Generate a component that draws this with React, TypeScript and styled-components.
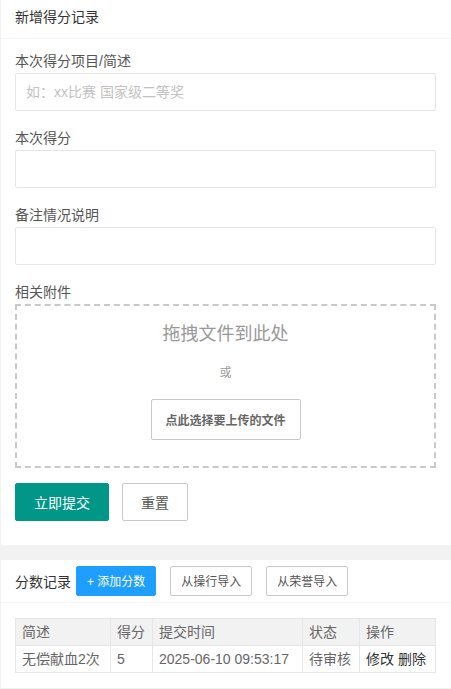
import React from "react";
import styled, { createGlobalStyle } from "styled-components";

const FONT = `"Liberation Sans", "Noto Sans CJK SC", sans-serif`;

const GlobalStyle = createGlobalStyle`
  html, body {
    margin: 0;
    padding: 0;
    background: #f2f2f2;
  }
  body {
    font-family: ${FONT};
    color: #333;
  }
  * {
    box-sizing: border-box;
  }
`;

type Row = {
  title: string;
  score: number;
  time: string;
  status: string;
};

const rows: Row[] = [
  { title: "无偿献血2次", score: 5, time: "2025-06-10 09:53:17", status: "待审核" },
];

const App: React.FC = () => {
  return (
    <>
      <GlobalStyle />
      <Page>
        <Card>
          <CardHeader>新增得分记录</CardHeader>
          <CardBody>
            <FormItem>
              <Label>本次得分项目/简述</Label>
              <Input placeholder="如：xx比赛 国家级二等奖" />
            </FormItem>
            <FormItem>
              <Label>本次得分</Label>
              <Input />
            </FormItem>
            <FormItem>
              <Label>备注情况说明</Label>
              <Input />
            </FormItem>
            <FormItem>
              <Label>相关附件</Label>
              <DropZone>
                <DropTitle>拖拽文件到此处</DropTitle>
                <DropOr>或</DropOr>
                <PickButton type="button">点此选择要上传的文件</PickButton>
              </DropZone>
            </FormItem>
            <Actions>
              <Button $variant="primary" type="button">
                立即提交
              </Button>
              <Button type="button">重置</Button>
            </Actions>
          </CardBody>
        </Card>

        <Card>
          <ToolHeader>
            <HeaderTitle>分数记录</HeaderTitle>
            <SmallButton $variant="normal" type="button">
              + 添加分数
            </SmallButton>
            <SmallButton type="button">从操行导入</SmallButton>
            <SmallButton type="button">从荣誉导入</SmallButton>
          </ToolHeader>
          <TableBody>
            <Table>
              <colgroup>
                <col style={{ width: 95 }} />
                <col style={{ width: 42 }} />
                <col style={{ width: 150 }} />
                <col style={{ width: 57 }} />
                <col />
              </colgroup>
              <thead>
                <tr>
                  <Th>简述</Th>
                  <Th>得分</Th>
                  <Th>提交时间</Th>
                  <Th>状态</Th>
                  <Th>操作</Th>
                </tr>
              </thead>
              <tbody>
                {rows.map((r) => (
                  <tr key={r.time}>
                    <Td>{r.title}</Td>
                    <Td>{r.score}</Td>
                    <Td>{r.time}</Td>
                    <Td>{r.status}</Td>
                    <Td>
                      <OpLink>修改</OpLink> <OpLink>删除</OpLink>
                    </Td>
                  </tr>
                ))}
              </tbody>
            </Table>
          </TableBody>
        </Card>
      </Page>
    </>
  );
};

const Page = styled.div`
  display: flex;
  flex-direction: column;
  gap: 15px;
  padding-left: 1px;
  min-height: 689px;
`;

const Card = styled.div`
  background: #fff;
`;

const CardHeader = styled.div`
  height: 39px;
  line-height: 34px;
  padding: 0 15px 0 14px;
  font-size: 14px;
  color: #333;
  border-bottom: 1px solid #f6f6f6;
`;

const CardBody = styled.div`
  padding: 12px 15px 24px 14px;
`;

const FormItem = styled.div`
  display: flex;
  flex-direction: column;
  margin-bottom: 17px;
`;

const Label = styled.label`
  font-size: 14px;
  line-height: 20px;
  color: #555;
  margin-bottom: 2px;
`;

const Input = styled.input`
  height: 38px;
  width: 100%;
  padding: 0 10px;
  border: 1px solid #e6e6e6;
  border-radius: 2px;
  font-family: ${FONT};
  font-size: 14px;
  color: #333;
  outline: none;

  &::placeholder {
    color: #c2c2c2;
  }
`;

const DropZone = styled.div`
  height: 164px;
  border: 2px dashed #c9c9c9;
  display: flex;
  flex-direction: column;
  align-items: center;
  padding-top: 14px;
`;

const DropTitle = styled.div`
  font-size: 18px;
  line-height: 28px;
  color: #999;
`;

const DropOr = styled.div`
  font-size: 12px;
  line-height: 20px;
  color: #999;
  margin-top: 15px;
`;

const PickButton = styled.button`
  margin-top: 16px;
  width: 150px;
  height: 41px;
  background: #fff;
  border: 1px solid #c9c9c9;
  border-radius: 2px;
  font-family: ${FONT};
  font-size: 12px;
  font-weight: bold;
  color: #666;
`;

const Actions = styled.div`
  display: flex;
  gap: 13px;
  margin-top: -2px;
`;

const Button = styled.button<{ $variant?: "primary" }>`
  height: 38px;
  padding: 0 18px;
  font-family: ${FONT};
  font-size: 14px;
  border-radius: 2px;
  border: 1px solid ${(p) => (p.$variant === "primary" ? "#009688" : "#c9c9c9")};
  background: ${(p) => (p.$variant === "primary" ? "#009688" : "#fff")};
  color: ${(p) => (p.$variant === "primary" ? "#fff" : "#555")};
`;

const ToolHeader = styled.div`
  height: 43px;
  display: flex;
  align-items: center;
  gap: 14px;
  padding: 0 15px 1px 14px;
  border-bottom: 1px solid #f6f6f6;
`;

const HeaderTitle = styled.span`
  font-size: 14px;
  color: #333;
  margin-right: -9px;
`;

const SmallButton = styled.button<{ $variant?: "normal" }>`
  height: 30px;
  padding: 0 10px;
  font-family: ${FONT};
  font-size: 12px;
  border-radius: 2px;
  border: 1px solid ${(p) => (p.$variant === "normal" ? "#1e9fff" : "#c9c9c9")};
  background: ${(p) => (p.$variant === "normal" ? "#1e9fff" : "#fff")};
  color: ${(p) => (p.$variant === "normal" ? "#fff" : "#555")};
`;

const TableBody = styled.div`
  padding: 15px 15px 15px 14px;
`;

const Table = styled.table`
  width: 100%;
  border-collapse: collapse;
  table-layout: fixed;
  font-size: 14px;
  color: #666;
`;

const Th = styled.th`
  text-align: left;
  font-weight: normal;
  background: #f2f2f2;
  border: 1px solid #e6e6e6;
  padding: 4px 6px;
  line-height: 18px;
  white-space: nowrap;
`;

const Td = styled.td`
  border: 1px solid #e6e6e6;
  padding: 4px 6px;
  line-height: 18px;
  white-space: nowrap;
`;

const OpLink = styled.a`
  color: #333;
  cursor: pointer;
`;

export default App;
